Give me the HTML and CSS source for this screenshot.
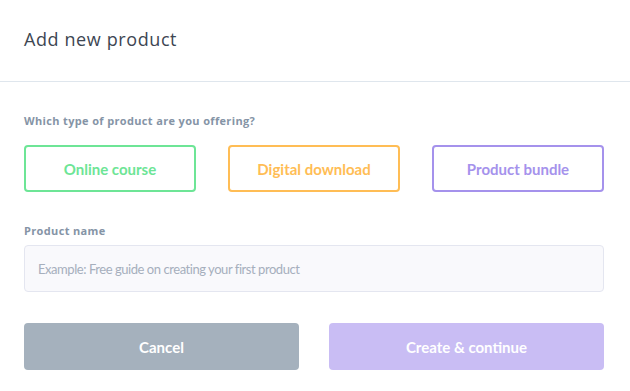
FILE: index.html
```html
<!DOCTYPE html>
<html lang="en">
<head>
  <meta charset="UTF-8">
  <title>Add new product</title>
  <link rel="stylesheet" href="styles.css">
</head>
<body>
  <div class="modal">
    <div class="modal-header">
      <h2>Add new product</h2>
    </div>
    <div class="modal-body">
      <p class="label">Which type of product are you offering?</p>
      <div class="types">
        <button class="type type-course">Online course</button>
        <button class="type type-download">Digital download</button>
        <button class="type type-bundle">Product bundle</button>
      </div>
      <p class="label label-name">Product name</p>
      <input class="name-input" type="text" placeholder="Example: Free guide on creating your first product">
      <div class="actions">
        <button class="btn btn-cancel">Cancel</button>
        <button class="btn btn-create">Create &amp; continue</button>
      </div>
    </div>
  </div>
</body>
</html>
```

FILE: styles.css
```css
body {
  margin: 0;
  background: #fff;
  font-family: 'Lato', 'Liberation Sans', sans-serif;
}
.modal-header {
  height: 81px;
  padding: 0 24px;
  border-bottom: 1px solid #dfe6ed;
  box-sizing: content-box;
}
.modal-header h2 {
  margin: 0;
  padding-top: 27px;
  font-family: 'Open Sans', sans-serif;
  font-size: 18px;
  line-height: 24px;
  font-weight: 400;
  letter-spacing: 0.6px;
  color: #3d4652;
}
.modal-body {
  padding: 0 26px 0 24px;
}
.label {
  margin: 32px 0 0;
  font-family: 'Open Sans', sans-serif;
  font-size: 11px;
  line-height: 14px;
  font-weight: 700;
  letter-spacing: 0.35px;
  color: #8594a6;
}
.types {
  display: grid;
  grid-template-columns: repeat(3, 1fr);
  gap: 32px;
  margin-top: 17px;
}
.type {
  height: 47px;
  background: #fff;
  border: 2px solid;
  border-radius: 4px;
  font-family: inherit;
  font-size: 15px;
  font-weight: 700;
  cursor: pointer;
}
.type-course {
  border-color: #6de596;
  color: #6de596;
}
.type-download {
  border-color: #ffbd55;
  color: #ffbd55;
}
.type-bundle {
  border-color: #a592ec;
  color: #a592ec;
}
.label-name {
  margin-top: 32px;
}
.name-input {
  display: block;
  width: 100%;
  box-sizing: border-box;
  height: 47px;
  margin-top: 7px;
  padding: 0 13px;
  background: #f9f9fc;
  border: 1px solid #e4e6f0;
  border-radius: 4px;
  font-family: inherit;
  font-size: 13px;
  letter-spacing: -0.45px;
  outline: none;
}
.name-input::placeholder {
  color: #a6afbd;
}
.actions {
  display: grid;
  grid-template-columns: 1fr 1fr;
  gap: 30px;
  margin-top: 31px;
}
.btn {
  height: 47px;
  border: none;
  border-radius: 4px;
  color: #fff;
  font-family: inherit;
  font-size: 15px;
  font-weight: 700;
  cursor: pointer;
}
.btn-cancel {
  background: #a5b1bd;
}
.btn-create {
  background: #c9bdf4;
}
```
